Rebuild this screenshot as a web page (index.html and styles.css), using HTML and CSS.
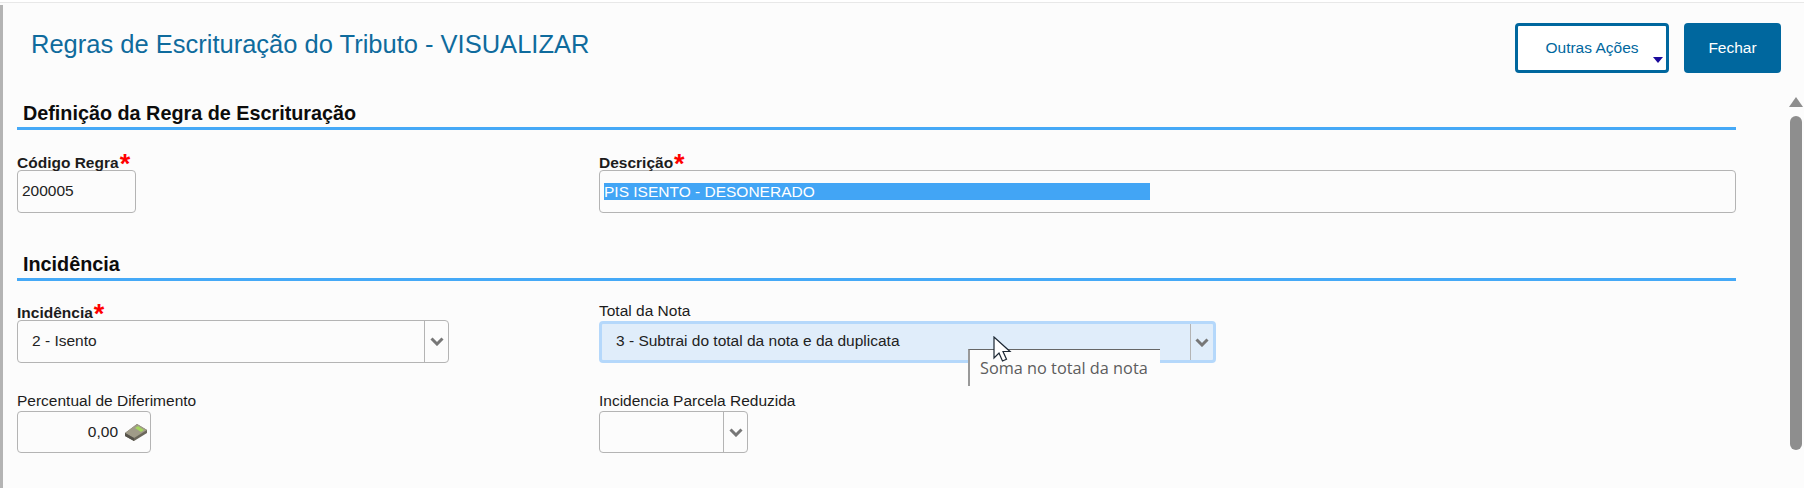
FILE: index.html
```html
<!DOCTYPE html>
<html lang="pt-BR">
<head>
<meta charset="utf-8">
<title>Regras de Escrituração do Tributo - VISUALIZAR</title>
<link rel="stylesheet" href="styles.css">
</head>
<body>
<div class="window">
  <div class="content">
    <header class="page-header">
      <h1 class="page-title">Regras de Escrituração do Tributo - VISUALIZAR</h1>
      <div class="actions">
        <button class="btn btn-outline">Outras Ações<span class="caret"></span></button>
        <button class="btn btn-solid">Fechar</button>
      </div>
    </header>

    <section class="section section-first">
      <h2 class="section-title">Definição da Regra de Escrituração</h2>
      <div class="row row-first">
        <div class="field col-a">
          <label class="label label-req">Código Regra<span class="star">*</span></label>
          <div class="box box-code"><span class="value">200005</span></div>
        </div>
        <div class="field col-b">
          <label class="label label-req">Descrição<span class="star">*</span></label>
          <div class="box box-desc"><span class="selected">PIS ISENTO - DESONERADO</span></div>
        </div>
      </div>
    </section>

    <section class="section section-second">
      <h2 class="section-title">Incidência</h2>
      <div class="row row-first">
        <div class="field col-a">
          <label class="label label-req">Incidência<span class="star">*</span></label>
          <div class="box select select-inc">
            <span class="select-text">2 - Isento</span>
            <span class="select-btn"><svg class="chev" viewBox="0 0 14 9"><path d="M1.5 1.5 7 7l5.5-5.5"/></svg></span>
          </div>
        </div>
        <div class="field col-b">
          <label class="label">Total da Nota</label>
          <div class="box select select-total">
            <span class="select-text">3 - Subtrai do total da nota e da duplicata</span>
            <span class="select-btn"><svg class="chev" viewBox="0 0 14 9"><path d="M1.5 1.5 7 7l5.5-5.5"/></svg></span>
          </div>
        </div>
      </div>
      <div class="row row-next">
        <div class="field col-a">
          <label class="label">Percentual de Diferimento</label>
          <div class="box box-num">
            <span class="value">0,00</span>
            <svg class="calc" viewBox="0 0 24 18">
              <path d="M1 10 13 1l10 6v3L10 18 1 13z" fill="#6b675b"/>
              <path d="M1 10 13 1l10 6-13 8z" fill="#a09b88"/>
              <path d="M11 5l3-2 6 4-3 2z" fill="#a5d65f"/>
              <path d="M1 10l9 5v3l-9-5z" fill="#55524a"/>
            </svg>
          </div>
        </div>
        <div class="field col-b">
          <label class="label">Incidencia Parcela Reduzida</label>
          <div class="box select select-red">
            <span class="select-text"></span>
            <span class="select-btn"><svg class="chev" viewBox="0 0 14 9"><path d="M1.5 1.5 7 7l5.5-5.5"/></svg></span>
          </div>
        </div>
      </div>
    </section>
  </div>

  <div class="scrollbar">
    <span class="scroll-up"></span>
    <span class="scroll-thumb"></span>
  </div>

  <div class="tooltip">Soma no total da nota</div>
  <svg class="cursor" viewBox="0 0 20 28">
    <path d="M1 1v21l5-5 3.500 8 4-1.700-3.500-7.800H17z" fill="#fff" stroke="#1c2733" stroke-width="1.200"/>
  </svg>
</div>
</body>
</html>
```

FILE: styles.css
```css
* { box-sizing: border-box; }
html, body { margin: 0; padding: 0; }
body {
  width: 1804px;
  height: 488px;
  overflow: hidden;
  background: #fff;
  font-family: "Liberation Sans", Arial, sans-serif;
}
.window {
  position: relative;
  display: flex;
  width: 1804px;
  height: 486px;
  margin-top: 2px;
  background: #fcfcfc;
  border-top: 1px solid #e8e8e8;
  overflow: hidden;
}
.window::before {
  content: "";
  position: absolute;
  left: 0;
  top: 2px;
  bottom: 0;
  width: 3px;
  background: #b4b4b4;
}
.content { width: 1719px; margin-left: 17px; }

.page-header {
  display: flex;
  justify-content: space-between;
  width: 1764px;
  height: 94px;
  padding-top: 20px;
}
.page-title {
  margin: 6px 0 0 14px;
  font-size: 25.5px;
  line-height: 30px;
  font-weight: 400;
  color: #0f6b9d;
}
.actions { display: flex; gap: 15px; height: 50px; }
.btn {
  height: 50px;
  border-radius: 4px;
  font-family: inherit;
  font-size: 15.5px;
  padding: 0;
}
.btn-outline {
  position: relative;
  width: 154px;
  background: #fff;
  border: 3px solid #00679e;
  color: #00679e;
}
.btn-solid {
  width: 97px;
  background: #00679e;
  border: 0;
  color: #fff;
}
.caret {
  position: absolute;
  right: 3px;
  bottom: 7px;
  border-left: 5px solid transparent;
  border-right: 5px solid transparent;
  border-top: 6px solid #1b0a9c;
}

.section-title {
  margin: 0;
  padding: 4px 0 0 6px;
  height: 33px;
  border-bottom: 3px solid #45a9f7;
  font-size: 19.8px;
  line-height: 24px;
  font-weight: 700;
  color: #0c0c0c;
}
.section-second { margin-top: 35px; }

.row { display: flex; }
.row-first { margin-top: 23px; }
.section-second .row-first { margin-top: 22px; }
.row-next { margin-top: 30px; }
.col-a { width: 582px; }
.col-b { flex: 1; }

.label {
  display: block;
  position: relative;
  height: 18px;
  font-size: 15.5px;
  line-height: 16px;
  color: #1c1c1c;
}
.label-req { font-weight: 700; height: 15px; margin-top: 2px; }
.star {
  position: absolute;
  margin-left: 1px;
  margin-top: -4px;
  font-size: 27px;
  line-height: 27px;
  font-weight: 700;
  color: #f00;
}

.box {
  height: 43px;
  border: 1px solid #b4b4b4;
  border-radius: 4px;
  display: flex;
  align-items: center;
  font-size: 15.5px;
  color: #222;
  background: #fcfcfc;
}
.value { font-size: 15.5px; }
.box-code { width: 119px; padding: 0 4px 2px; }
.box-desc { width: 1137px; padding-left: 4px; }
.selected {
  display: block;
  width: 546px;
  height: 17px;
  background: #42a5f5;
  color: #fff;
  font-size: 15.5px;
  line-height: 17px;
}

.select { justify-content: space-between; }
.select-text { padding: 0 0 2px 14px; font-size: 15.5px; }
.select-btn {
  height: 100%;
  width: 24px;
  display: flex;
  align-items: center;
  justify-content: center;
  border-left: 1px solid #b4b4b4;
}
.chev { width: 14px; height: 9px; fill: none; stroke: #777; stroke-width: 3; }
.select-inc { width: 432px; }
.select-total {
  width: 617px;
  height: 42px;
  border: 3px solid #b5d8fb;
  background: #e0edfa;
}
.select-total .select-btn { width: 23px; }
.select-red { width: 149px; }
.row-next .box { height: 42px; }

.box-num { width: 134px; justify-content: flex-end; padding-right: 2px; gap: 6px; }
.calc { width: 24px; height: 18px; }

.scrollbar {
  position: absolute;
  right: 1px;
  top: 94px;
  width: 14px;
  display: flex;
  flex-direction: column;
  align-items: center;
  gap: 9px;
}
.scroll-up {
  width: 0;
  height: 0;
  border-left: 7px solid transparent;
  border-right: 7px solid transparent;
  border-bottom: 10px solid #8e8e8e;
}
.scroll-thumb {
  width: 12px;
  height: 334px;
  background: #8e8e8e;
  border-radius: 6px;
}

.tooltip {
  position: absolute;
  left: 968px;
  top: 346px;
  width: 192px;
  height: 37px;
  padding: 6px 0 0 10px;
  background: #fcfcfc;
  border-top: 1px solid #666;
  border-left: 2px solid #999;
  font-family: "Open Sans", sans-serif;
  font-size: 16.3px;
  line-height: 24px;
  color: #5d5d5d;
}
.cursor {
  position: absolute;
  left: 993px;
  top: 333px;
  width: 20px;
  height: 28px;
}
```
